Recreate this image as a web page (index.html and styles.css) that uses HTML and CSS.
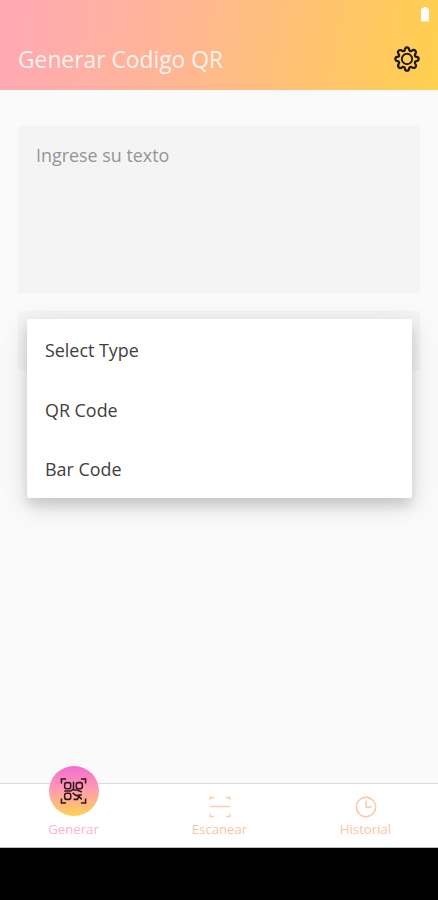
FILE: index.html
```html
<!DOCTYPE html>
<html lang="es">
<head>
<meta charset="utf-8">
<meta name="viewport" content="width=device-width, initial-scale=1">
<title>Generar Codigo QR</title>
<link rel="stylesheet" href="styles.css">
</head>
<body>
<div class="app">
  <header class="header">
    <div class="status"><svg width="8" height="15" viewBox="0 0 8 15"><path d="M2.5 0h3v1.2H7q1 0 1 1V13.500q0 1-1 1H1q-1 0-1-1V2.200q0-1 1-1h1.500z" fill="#fff"/></svg></div>
    <div class="bar">
      <h1 class="title">Generar Codigo QR</h1>
      <svg class="gear" viewBox="0 0 26 26" fill="none" stroke="#21180c" stroke-width="2.2" stroke-linejoin="round"><path d="M10.700 4.200Q11 1.300 13 1.300T15.300 4.200Q16 5.600 17.600 4.900Q19.900 3 21.300 4.700T21.100 8.400Q20.400 10 21.800 10.700Q24.700 11 24.700 13T21.800 15.300Q20.400 16 21.100 17.600Q23 19.900 21.300 21.300T17.600 21.100Q16 20.400 15.300 21.800Q15 24.700 13 24.700T10.700 21.800Q10 20.400 8.400 21.100Q6.100 23 4.700 21.300T4.900 17.600Q5.600 16 4.200 15.300Q1.300 15 1.300 13T4.200 10.700Q5.600 10 4.900 8.400Q3 6.100 4.700 4.700T8.400 4.900Q10 5.600 10.700 4.200Z"/><circle cx="13" cy="13" r="5.200" stroke-width="1.900"/></svg>
    </div>
  </header>
  <main class="content">
    <div class="textbox">Ingrese su texto</div>
    <div class="select">
      <ul class="menu">
        <li>Select Type</li>
        <li>QR Code</li>
        <li>Bar Code</li>
      </ul>
    </div>
  </main>
  <nav class="tabs">
    <a class="tab active">
      <span class="bubble"><svg width="27" height="26" viewBox="0 0 28 28" fill="none" stroke="#35151f" stroke-width="1.700"><path d="M1 6V1h5M22 1h5v5M27 22v5h-5M6 27H1v-5"/><rect x="4.500" y="5" width="6.500" height="6.500" rx="2"/><rect x="17" y="5" width="6.500" height="6.500" rx="2"/><rect x="4.500" y="16.500" width="6.500" height="6.500" rx="2"/><path d="M14 4v8l-3 2H4M14 13h4l5 2M13 16l4 3 6-1M14 23h4l2-3 3 3"/></svg></span>
      <span class="label">Generar</span>
    </a>
    <a class="tab">
      <svg class="icon" viewBox="0 0 22 22" fill="none" stroke="#fdcbb0" stroke-width="1.300"><path d="M1 4.500V1.500h4M17 1.500h4v3M21 17.500v3h-4M5 20.500H1v-3M1 10.500h20"/></svg>
      <span class="label">Escanear</span>
    </a>
    <a class="tab">
      <svg class="icon" viewBox="0 0 22 22" fill="none" stroke="#fdc3a6" stroke-width="1.400"><circle cx="11" cy="11" r="9.700"/><path d="M11 4.500V11h5.500"/></svg>
      <span class="label">Historial</span>
    </a>
  </nav>
  <div class="system"></div>
</div>
</body>
</html>
```

FILE: styles.css
```css
* { box-sizing: border-box; }
body { margin: 0; font-family: "Open Sans", "Noto Sans", sans-serif; background: #fafafa; }
.app { height: 900px; display: flex; flex-direction: column; overflow: hidden; }
.header { height: 90px; flex: none; background: linear-gradient(100deg, #ffa8b6 0%, #ffb597 38%, #ffc36e 72%, #ffd04d 100%); }
.status { height: 29px; padding: 7px 9px 0 0; display: flex; justify-content: flex-end; }
.bar { height: 60px; padding: 0 18px; display: flex; align-items: center; justify-content: space-between; }
.title { margin: 0; font-size: 22.800px; font-weight: 400; color: #fff3ef; white-space: nowrap; }
.gear { width: 26px; height: 26px; margin-top: -1px; }
.content { flex: 1; padding: 36px 18px 0; }
.textbox { height: 167px; padding: 17px 18px; border-radius: 4px 4px 0 0; background: #f4f4f4; color: #949494; font-size: 17.900px; line-height: 24px; }
.select { position: relative; height: 59px; margin-top: 18px; background: #f4f4f4; border-radius: 4px 4px 0 0; }
.menu { position: absolute; left: 9px; right: 8px; top: 8px; margin: 0; padding: 0; list-style: none; background: #fff; border-radius: 2px; box-shadow: 0 8px 12px rgba(0,0,0,.13), 0 7px 30px rgba(0,0,0,.12); }
.menu li { height: 59.600px; padding-left: 18px; line-height: 62px; font-size: 17.900px; color: #404040; }
.tabs { flex: none; height: 65px; display: flex; background: #fff; border-top: 1px solid #dcdcdc; border-bottom: 1px solid #bbb; }
.tab { flex: 1; display: flex; flex-direction: column; align-items: center; padding: 12px 0 0 1px; color: #fdc3a6; }
.tab.active { padding-top: 0; color: #ffb3c4; }
.bubble { width: 50px; height: 50px; margin-top: -18px; flex: none; border-radius: 50%; display: flex; align-items: center; justify-content: center; background: linear-gradient(#f46bd4, #ff9fac 50%, #ffd152); }
.icon { width: 22px; height: 22px; }
.label { font-size: 13.200px; line-height: 18px; margin-top: 2px; }
.active .label { margin-top: 4px; }
.system { flex: none; height: 52px; background: #000; }
```
